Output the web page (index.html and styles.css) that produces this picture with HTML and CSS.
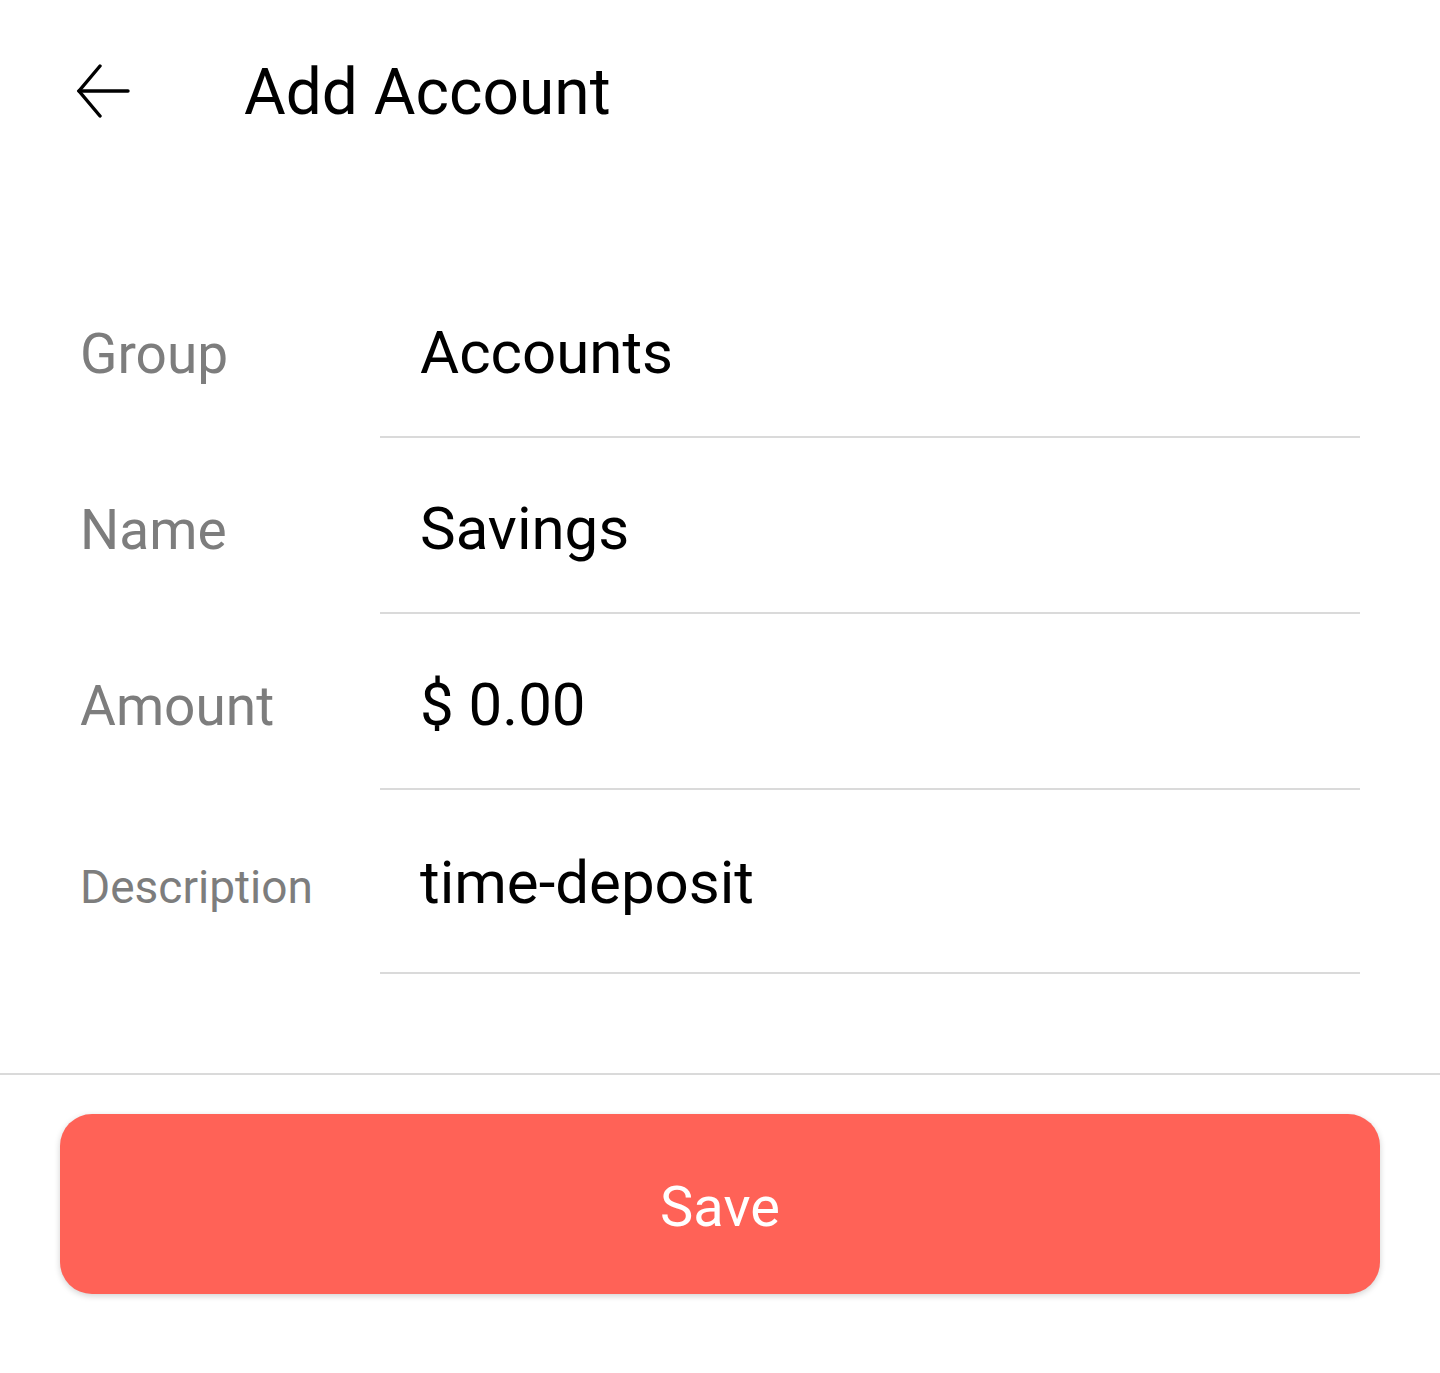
FILE: index.html
```html
<!DOCTYPE html>
<html>
<head>
<meta charset="utf-8">
<link rel="stylesheet" href="styles.css">
</head>
<body>
<div class="screen">
  <header class="topbar">
    <button class="back" aria-label="Back">
      <svg width="56" height="54" viewBox="0 0 56 54" fill="none" stroke="#000" stroke-width="3.4" stroke-linecap="round" stroke-linejoin="miter">
        <path d="M53 27 H4"/>
        <path d="M25 2 L4 27 L25 52"/>
      </svg>
    </button>
    <h1 class="title">Add Account</h1>
  </header>

  <form class="form">
    <div class="row">
      <div class="label">Group</div>
      <div class="field">Accounts</div>
    </div>
    <div class="row">
      <div class="label">Name</div>
      <div class="field">Savings</div>
    </div>
    <div class="row">
      <div class="label">Amount</div>
      <div class="field">$ 0.00</div>
    </div>
    <div class="row">
      <div class="label label-small">Description</div>
      <div class="field field-desc">time-deposit</div>
    </div>
  </form>

  <footer class="footer">
    <button class="save" type="button">Save</button>
  </footer>
</div>
</body>
</html>
```

FILE: styles.css
```css
* { box-sizing: border-box; }

html, body {
  margin: 0;
  padding: 0;
  background: #ffffff;
}

body {
  font-family: Roboto, "Noto Sans", "Liberation Sans", sans-serif;
  color: #000;
}

.screen {
  width: 1440px;
  min-height: 1373px;
}

.topbar {
  height: 186px;
  display: flex;
  align-items: center;
  padding-left: 75px;
}

.back {
  border: 0;
  background: none;
  padding: 0;
  margin: 0 0 4px 0;
  width: 56px;
  height: 54px;
  display: flex;
}

.title {
  margin: 0 0 0 113px;
  font-weight: 400;
  font-size: 64px;
  line-height: 76px;
  color: #000;
}

.form {
  margin-top: 76px;
}

.row {
  display: flex;
  align-items: baseline;
  padding-left: 80px;
  padding-right: 80px;
}

.label {
  width: 300px;
  flex: none;
  font-size: 55px;
  line-height: 70px;
  color: #7d7d7d;
}

.label-small {
  font-size: 46px;
}

.field {
  flex: 1;
  height: 176px;
  padding: 56px 0 48px 40px;
  font-size: 60px;
  line-height: 70px;
  color: #000;
  border-bottom: 2px solid #dadada;
}

.field-desc {
  height: 184px;
  padding-top: 58px;
}

.footer {
  margin-top: 99px;
  border-top: 2px solid #dadada;
  padding: 39px 60px 0;
}

.save {
  display: block;
  width: 100%;
  height: 180px;
  padding: 5px 0 0;
  border: 0;
  border-radius: 32px;
  background: #ff6257;
  color: #ffffff;
  font-family: Roboto, "Noto Sans", "Liberation Sans", sans-serif;
  font-size: 56px;
  line-height: 1;
  box-shadow: 0 2px 6px rgba(0, 0, 0, 0.18);
}
```
